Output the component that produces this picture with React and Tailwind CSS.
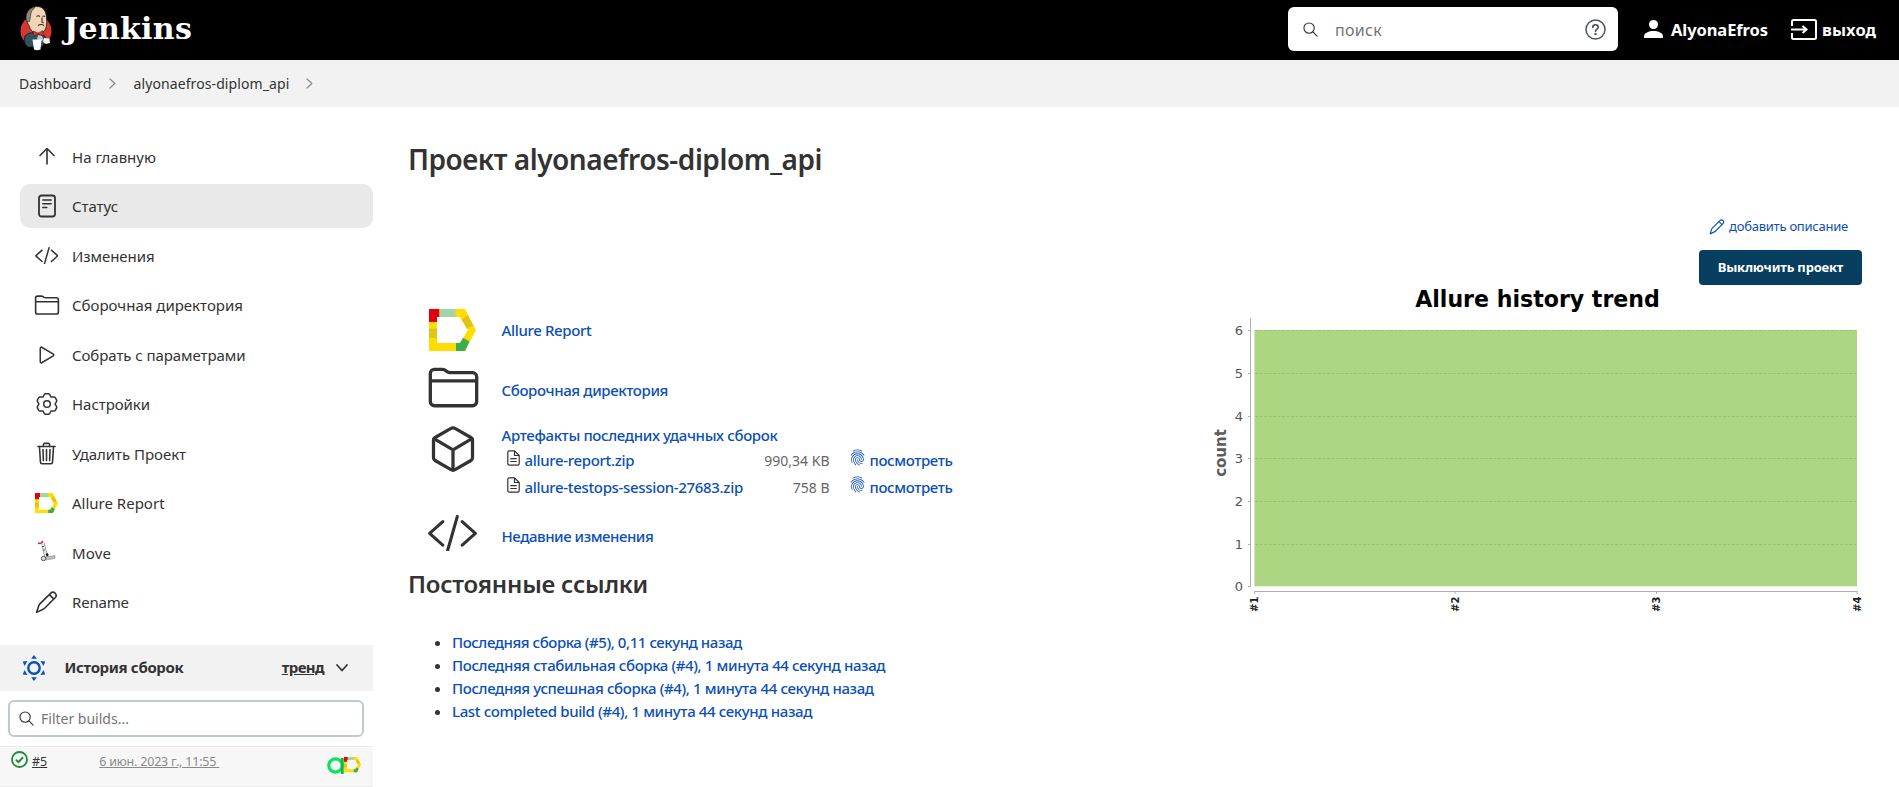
import {
  IoCubeOutline,
  IoFingerPrintOutline,
  IoFolderOutline,
  IoPlayOutline,
  IoTrashOutline,
} from 'react-icons/io5';

const Text = ({ as: Tag = 'span', className = '', children }) => (
  <Tag className={`whitespace-pre ${className}`}>{children}</Tag>
);

const Butler = () => (
  <svg width="34" height="46" viewBox="0 0 34 46">
    <ellipse cx="17" cy="26" rx="15.500" ry="15.500" fill="#d33833" />
    <path d="M6 31c3-3 7-4 11-3l9 3c1 4-1 8-3 11H9c-4-3-4-7-3-11z" fill="#335061" stroke="#0c141b" strokeWidth=".8" />
    <path d="M8.500 14C8 6 12 1.500 18 1.500s9 4 9.500 11c.3 4 .5 6-.5 10-1 4-4 6-8 6-5 0-8-4-9-8-1.500-1.500-2-4-1.500-6.500z" fill="#f0d6b7" stroke="#2a2320" strokeWidth=".9" />
    <path d="M8.500 17c-2.500-3-1.500-9 1.500-12 2-2 4-2.500 6-2.500-3 2-4.500 5-4.500 9l-1 5z" fill="#8b8781" stroke="#2a2320" strokeWidth=".6" />
    <path d="M17.500 11.500c1-.8 2.500-.8 3.500 0M23.500 11.500c1-.7 2-.6 2.600.1M23 12.500v4.500l1.500 1M19 20.500c2-1.200 4.500-1 6 0" stroke="#3a2a22" strokeWidth="1.100" fill="none" />
    <path d="M14.500 26l4.500 2 5-2.500v5.500l-5-2-4.500 2z" fill="#d33833" stroke="#5c1512" strokeWidth=".5" />
    <path d="M19 30l4 1 1.500 4-3.500 1.500-3-2.500z" fill="#b9c6cf" />
    <path d="M13.500 34.500h9l-1 10c-2.500 1-4.500 1-6.500 0z" fill="#fff" />
    <path d="M25 33l5.500.5.5 4.500-4 1-3-2z" fill="#f4f1ee" />
  </svg>
);

const AllureMark = ({ size }) => (
  <svg width={size} height={(size * 42) / 47} viewBox="0 0 47 42">
    <path d="M0 0h36l11 21-11 21H0zM8 8v26h23l8-13-8-13z" fill="#fd0" fillRule="evenodd" />
    <path d="M0 0h10.500v8H8v5H0z" fill="#e3000f" />
    <path d="M10.500 0h16v8h-16z" fill="#a5d3a6" />
    <path d="M0 19.500h8V29H0z" fill="#e0c516" />
    <path d="M32.500 10.500l6.500-4 5 10-6 3.500z" fill="#e0c516" />
    <path d="M27 34h4l3-5 6.500 3.500L36 42h-9z" fill="#3bad4b" />
  </svg>
);

const CodeIcon = ({ size, stroke }) => (
  <svg width={size} height={size * 0.75} viewBox="0 0 48 36" fill="none" stroke="currentColor" strokeWidth={stroke} strokeLinecap="round" strokeLinejoin="round">
    <path d="M14.500 6.500L1.600 18l12.900 11.500M33.500 6.500L46.400 18 33.500 29.500M28.700 1.500l-9.400 33" />
  </svg>
);

const PencilIcon = ({ size, stroke = 1.7 }) => (
  <svg width={size} height={size} viewBox="0 0 24 24" fill="none" stroke="currentColor" strokeWidth={stroke} strokeLinejoin="round">
    <path d="M1.700 22.300L4 15.200C4.300 14.400 4.700 13.800 5.300 13.200L16.300 2.400c1.400-1.300 3.400-1.300 4.700-.1 1.300 1.300 1.300 3.400 0 4.700L10 18c-.6.6-1.200 1-2 1.300z" />
    <path d="M15 3.800L19.600 8.400" />
  </svg>
);

const StatusIcon = () => (
  <svg width="18" height="24" viewBox="0 0 18 24" fill="none" stroke="currentColor" strokeLinecap="round">
    <rect x="1" y="1.500" width="16" height="21" rx="2.500" strokeWidth="1.800" />
    <path d="M4.800 6h8.400M4.800 9.700h8.400M4.800 13.400h4" strokeWidth="1.500" />
  </svg>
);

const gearPath =
  Array.from({ length: 72 }, (_, i) => {
    const a = (i * 5 * Math.PI) / 180;
    const r = 9.6 + 1.1 * Math.cos(6 * a) + 0.35 * Math.cos(12 * a + Math.PI);
    return `${i ? 'L' : 'M'}${(12 + r * Math.sin(a)).toFixed(2)} ${(12 - r * Math.cos(a)).toFixed(2)}`;
  }).join('') + 'z';

const GearIcon = () => (
  <svg width="24" height="24" viewBox="0 0 24 24" fill="none" stroke="currentColor" strokeWidth="1.500" strokeLinejoin="round">
    <path d={gearPath} />
    <circle cx="12" cy="12" r="3.300" />
  </svg>
);

const ArrowUp = () => (
  <svg width="18" height="18" viewBox="0 0 18 18" fill="none" stroke="currentColor" strokeWidth="1.600" strokeLinecap="round" strokeLinejoin="round" className="-mt-px">
    <path d="M2 8.500L9 1.500l7 7M9 2v15" />
  </svg>
);

const ScooterIcon = () => (
  <svg width="20" height="22" viewBox="0 0 20 22" fill="none" className="-mt-1">
    <path d="M1 3.500l3.500-.5L6 1" stroke="#d22" strokeWidth="1.500" />
    <path d="M4.500 3l3 13M7 3l3 11" stroke="#9a9a9a" strokeWidth="1" />
    <path d="M5.500 4l3.500 11" stroke="#e4e4e4" strokeWidth="1.600" />
    <path d="M5 6.500h2M6 10h2" stroke="#555" strokeWidth="1" />
    <path d="M9.500 13.500l1 1.500-.5 1.500" stroke="#111" strokeWidth="2" />
    <path d="M7 17l11-1.500v3L8 20z" fill="#bdbdbd" stroke="#8b8b8b" strokeWidth=".6" />
    <circle cx="6.500" cy="18.500" r="2.200" fill="#ddd" stroke="#555" strokeWidth="1" />
  </svg>
);

const SearchIcon = ({ size }) => (
  <svg width={size} height={size} viewBox="0 0 16 16" fill="none" stroke="#333" strokeWidth="1.200" strokeLinecap="round">
    <circle cx="6.500" cy="6.500" r="5.500" />
    <path d="M10.600 10.600L15 15" />
  </svg>
);

const Chevron = ({ className = '' }) => (
  <svg width="7" height="11" viewBox="0 0 7 11" fill="none" stroke="#8c8c8c" strokeWidth="1.300" strokeLinecap="round" strokeLinejoin="round" className={className}>
    <path d="M1 1l4.800 4.500L1 10" />
  </svg>
);

const SunIcon = () => (
  <svg width="24" height="26" viewBox="0 0 24 26" fill="#0b4fb8">
    <circle cx="12" cy="13" r="5.700" fill="none" stroke="#0b4fb8" strokeWidth="2.400" />
    {[0, 60, 120, 180, 240, 300].map((a) => (
      <path key={a} d="M12 0l2.900 3.800H9.100z" transform={`rotate(${a} 12 13)`} />
    ))}
  </svg>
);

const FileIcon = () => (
  <svg width="13" height="16" viewBox="0 0 13 16" fill="none" stroke="#333" strokeWidth="1.200" strokeLinejoin="round" strokeLinecap="round">
    <path d="M7.500.8H2.200C1.400.8.8 1.400.8 2.200v11.600c0 .8.6 1.400 1.400 1.400h8.600c.8 0 1.400-.6 1.400-1.400V5.500zM7.500.8v4.700h4.700M3.700 8.700h5.600M3.700 11.500h5.600" />
  </svg>
);

const sidebar = [
  ['На главную', <ArrowUp />, ''],
  ['Статус', <StatusIcon />, 'tracking-[-0.05px]'],
  ['Изменения', <CodeIcon size={23.5} stroke={3.1} />, 'tracking-[-0.07px]'],
  ['Сборочная директория', <IoFolderOutline size={26} />, ''],
  ['Собрать с параметрами', <IoPlayOutline size={24} />, 'tracking-[-0.07px]'],
  ['Настройки', <GearIcon />, 'tracking-[-0.05px]'],
  ['Удалить Проект', <IoTrashOutline size={25} />, 'tracking-[-0.04px]'],
  ['Allure Report', <AllureMark size={23} />, ''],
  ['Move', <ScooterIcon />, 'tracking-[0.13px]'],
  ['Rename', <PencilIcon size={23} />, 'tracking-[-0.2px]'],
];

const permalinks = [
  ['Последняя сборка (#5), 0,11 секунд назад', 'tracking-[-0.44px]'],
  ['Последняя стабильная сборка (#4), 1 минута 44 секунд назад', 'tracking-[-0.38px]'],
  ['Последняя успешная сборка (#4), 1 минута 44 секунд назад', 'tracking-[-0.37px]'],
  ['Last completed build (#4), 1 минута 44 секунд назад', 'tracking-[-0.37px]'],
];

const files = [
  ['allure-report.zip', '990,34 KB'],
  ['allure-testops-session-27683.zip', '758 B'],
];

const Chart = () => (
  <svg width="662" height="335" viewBox="1206 285 662 335" fontFamily="'DejaVu Sans', sans-serif">
    <text x="1537.500" y="307" textAnchor="middle" fontSize="22.100" fontWeight="700" fill="#000">Allure history trend</text>
    <rect x="1254.500" y="330" width="602.500" height="256.300" fill="#add683" />
    <path d="M1250.500 318v269" stroke="#b0b0b0" />
    <path d="M1254 591.500h603.500" stroke="#b0b0b0" />
    {[330.5, 373.5, 416.5, 458.5, 501.5, 544.5, 586.5].map((y, i) => (
      <g key={y}>
        {i < 6 && <path d={`M1255 ${y}h601`} stroke="#98c373" strokeDasharray="3 1.500" />}
        <path d={`M1248 ${y}h2.500`} stroke="#b0b0b0" />
        <text x="1243" y={y + 4.5} textAnchor="end" fontSize="13" fill="#555">{6 - i}</text>
      </g>
    ))}
    {[1254.5, 1455, 1656.5, 1857].map((x, i) => (
      <g key={x}>
        <path d={`M${x} 591.500v2.500`} stroke="#b0b0b0" />
        <text transform={`translate(${x + 3.5} 612) rotate(-90)`} fontSize="10" fontWeight="700" fill="#222">#{i + 1}</text>
      </g>
    ))}
    <text transform="translate(1225.500 453) rotate(-90)" textAnchor="middle" fontSize="15" fontWeight="700" fill="#5c5c5c">count</text>
  </svg>
);

export default function App() {
  return (
    <div className="flex h-[787px] w-[1899px] flex-col overflow-hidden bg-white font-['Noto_Sans',sans-serif] text-[15px] text-[#333]">
      <header className="flex h-[60px] shrink-0 items-center bg-black text-white">
        <div className="flex w-[400px] items-center pl-[19px]">
          <span className="-mt-1"><Butler /></span>
          <Text className="ml-[11px] mt-[-2px] font-['DejaVu_Serif',serif] text-[30px] font-bold leading-[30px] tracking-[0.3px]">Jenkins</Text>
        </div>
        <div className="ml-auto flex h-11 w-[330px] -translate-y-px items-center rounded-md bg-white pl-[15px] pr-3">
          <SearchIcon size={15} />
          <Text className="ml-[17px] flex-1 pt-[2px] text-[16px] tracking-[0.3px] text-[#757575]">поиск</Text>
          <svg width="21" height="21" viewBox="0 0 21 21" fill="none" stroke="#4d545d" strokeWidth="1.500" strokeLinecap="round">
            <circle cx="10.500" cy="10.500" r="9.500" />
            <path d="M7.800 8.300c0-1.500 1.200-2.400 2.700-2.400s2.700 1 2.700 2.300c0 1.900-2.600 2-2.600 4" strokeWidth="1.700" />
            <circle cx="10.500" cy="15" r=".5" fill="#4d545d" />
          </svg>
        </div>
        <div className="flex w-[281px] items-center pl-[26px]">
          <svg width="19" height="18" viewBox="0 0 19 18" fill="#fff" className="-mt-[3px]"><circle cx="9.500" cy="4.500" r="4.500" /><path d="M0 18v-2c0-3 5-5 9.500-5s9.500 2 9.500 5v2z" /></svg>
          <Text className="ml-[8px] text-[16.500px] font-bold tracking-[-0.09px]">AlyonaEfros</Text>
          <svg width="26" height="21" viewBox="0 0 26 21" fill="none" stroke="#fff" strokeWidth="2" className="-mt-[2px] ml-[23px]">
            <path d="M1 7V2.500C1 1.600 1.600 1 2.500 1h21c.9 0 1.500.6 1.500 1.500v16c0 .9-.6 1.500-1.500 1.500h-21c-.9 0-1.500-.6-1.500-1.500V14M0 10.500h14M11.500 7l4 3.500-4 3.500" />
          </svg>
          <Text className="ml-[5px] text-[16.500px] font-bold tracking-[0.1px]">выход</Text>
        </div>
      </header>

      <nav className="flex h-[47px] shrink-0 items-center bg-[#f2f2f2] pl-[19px] text-[14px]">
        <Text>Dashboard</Text>
        <Chevron className="ml-[18px]" />
        <Text className="ml-[17px] tracking-[0.1px]">alyonaefros-diplom_api</Text>
        <Chevron className="ml-[17px]" />
      </nav>

      <div className="flex min-h-0 flex-1">
        <aside className="flex w-[373px] shrink-0 flex-col pt-[27.500px]">
          <ul className="ml-5 flex flex-col gap-[5.500px]">
            {sidebar.map(([label, icon, tracking], i) => (
              <li key={label} className={`flex h-11 items-center rounded-[10px] ${i === 1 ? 'bg-[#e9e9e9]' : ''}`}>
                <span className="flex w-[52px] justify-center pl-px">{icon}</span>
                <Text className={`pt-px ${tracking}`}>{label}</Text>
              </li>
            ))}
          </ul>
          <div className="mt-[20.500px] flex h-[46px] shrink-0 items-center bg-[#f2f2f2] pl-[22px] pr-[25px] font-bold">
            <SunIcon />
            <Text className="ml-[18.500px] tracking-[-0.34px]">История сборок</Text>
            <Text className="ml-auto tracking-[-0.6px] underline">тренд</Text>
            <svg width="12" height="8" viewBox="0 0 12 8" fill="none" stroke="#333" strokeWidth="1.700" strokeLinecap="round" strokeLinejoin="round" className="ml-3"><path d="M1 1l5 5.500L11 1" /></svg>
          </div>
          <div className="ml-2 mt-[9px] flex h-[37px] w-[356px] shrink-0 items-center rounded-md border-2 border-[#bfcacf] pl-[9px] text-[14px] text-[#757575]">
            <SearchIcon size={15} />
            <Text className="ml-[7px] pt-px">Filter builds...</Text>
          </div>
          <div className="mt-[9px] flex h-[41px] shrink-0 items-start border-y border-[#ededed] bg-[#f7f7f7] pl-[10.500px] text-[12.500px]">
            <svg width="17" height="17" viewBox="0 0 17 17" fill="none" stroke="#1e8b3c" strokeWidth="1.800" className="mt-[4px]"><circle cx="8.500" cy="8.500" r="7.500" /><path d="M5 8.700l2.500 2.400L12 6.300" strokeWidth="2" /></svg>
            <Text className="ml-[4.500px] mt-[6px] underline">#5</Text>
            <Text className="ml-[52px] mt-[6px] tracking-[-0.2px] text-[#8a8a8a] underline">{'6 июн. 2023 г., 11:55 '}</Text>
            <span className="ml-auto mr-[12px] mt-[10px] flex items-center">
              <svg width="17" height="17" viewBox="0 0 17 17" fill="none" stroke="#0be35a" strokeWidth="3.200"><circle cx="8.500" cy="8.500" r="6.700" /><path d="M15.300 1v16" stroke="#12b63e" strokeWidth="2.800" /></svg>
              <AllureMark size={17} />
            </span>
          </div>
        </aside>

        <main className="flex min-w-0 flex-1 flex-col pl-[35px] pt-[34px]">
          <Text as="h1" className="text-[28px] font-semibold leading-9 tracking-[-0.46px]">Проект alyonaefros-diplom_api</Text>
          <div className="flex text-[#0b4fb8]">
            <div className="w-[798px] shrink-0 pt-[123px] font-medium">
              <div className="flex h-[60px] items-center">
                <span className="flex w-[93.500px] justify-center pr-[4px]"><AllureMark size={47} /></span>
                <Text className="tracking-[-0.35px]">Allure Report</Text>
              </div>
              <div className="flex h-[60px] items-center">
                <span className="-mt-[6px] flex w-[93.500px] justify-center pr-[3px] text-[#333]"><IoFolderOutline size={53} /></span>
                <Text className="tracking-[-0.37px]">Сборочная директория</Text>
              </div>
              <div className="flex h-[85px] items-start">
                <span className="flex w-[93.500px] justify-center pr-[3px] pt-[3px] text-[#333]"><IoCubeOutline size={52} /></span>
                <div className="pt-[4px]">
                  <Text className="block h-[23px] leading-[23px] tracking-[-0.35px]">Артефакты последних удачных сборок</Text>
                  {files.map(([name, size]) => (
                    <div key={name} className="flex h-[27px] w-[452px] items-center pl-[5px]">
                      <span className="-mt-[5px]"><FileIcon /></span>
                      <Text className="ml-[5px] tracking-[-0.33px]">{name}</Text>
                      <Text className="ml-auto text-[14px] font-normal text-[#666]">{size}</Text>
                      <IoFingerPrintOutline size={17} className="-mt-[7px] ml-[19px] shrink-0" />
                      <Text className="ml-[4px] w-[84px] tracking-[-0.37px]">посмотреть</Text>
                    </div>
                  ))}
                </div>
              </div>
              <div className="flex h-[55px] items-center">
                <span className="flex w-[93.500px] justify-center pr-[4px] pt-px text-[#333]"><CodeIcon size={49} stroke={3} /></span>
                <Text className="mt-[7px] tracking-[-0.45px]">Недавние изменения</Text>
              </div>
              <Text as="h2" className="mt-[6px] text-[24px] font-semibold leading-9 tracking-[-0.22px] text-[#333]">Постоянные ссылки</Text>
              <ul className="mt-[29px] list-disc pl-[44px] leading-[23px] marker:text-[#333]">
                {permalinks.map(([label, tracking]) => (
                  <li key={label}><Text className={tracking}>{label}</Text></li>
                ))}
              </ul>
            </div>
            <div className="flex w-[662px] shrink-0 flex-col items-end pt-[36px]">
              <div className="flex h-[27px] items-center pr-[20px] text-[13px]">
                <PencilIcon size={16} />
                <Text className="ml-[4px] tracking-[-0.24px]">добавить описание</Text>
              </div>
              <button className="mr-[6px] mt-[10px] h-[35px] w-[163px] rounded-[4px] bg-[#073e60] text-[13px] font-bold tracking-[-0.18px] text-white">Выключить проект</button>
              <Chart />
            </div>
          </div>
        </main>
      </div>
    </div>
  );
}
